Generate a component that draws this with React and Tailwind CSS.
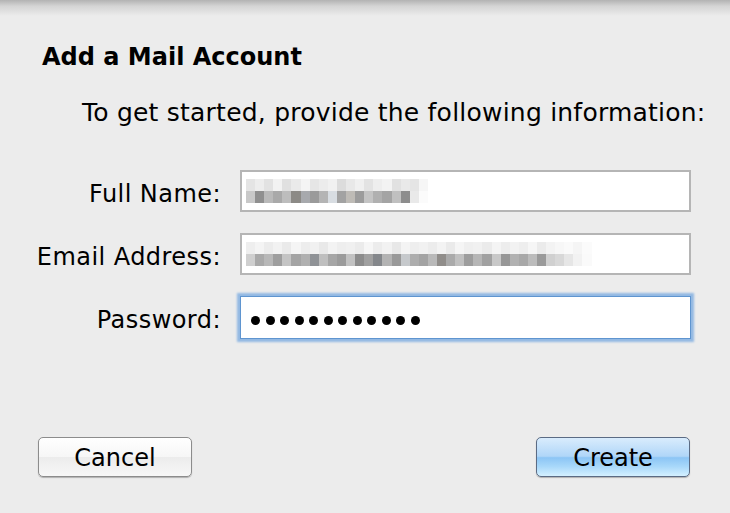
const nameTop = ['#e4e4e4', '#ededed', '#e2e2e2', '#f2f2f2', '#e0e0e0', '#eaeaea', '#f4f4f4', '#e6e6e6', '#ececec', '#f1f1f1', '#dcdcdc', '#e8e8e8', '#f0f0f0', '#e3e3e3', '#eeeeee', '#f3f3f3', '#e1e1e1', '#e9e9e9', '#e5e5e5', '#f6f6f6']
const nameBottom = ['#c8c8c8', '#8f8f8f', '#b9b9b9', '#a9a9a9', '#bdbdbd', '#8c8a86', '#a7a9ad', '#9a9a9a', '#b4b4b4', '#d8dde2', '#a2a2a2', '#bebbb6', '#9c9c9c', '#c4c4c4', '#b0b0b0', '#a4a4a4', '#c0c0c0', '#8d8d8d', '#e9e9e9', '#fbfbfb']
const mailTop = ['#eeeeee', '#f4f4f4', '#ececec', '#f2f2f2', '#eaeaea', '#f5f5f5', '#ededed', '#f1f1f1', '#e9e9e9', '#f3f3f3', '#eeeeee', '#f0f0f0', '#ebebeb', '#f6f6f6', '#ececec', '#f2f2f2', '#e8e8e8', '#f4f4f4', '#eeeeee', '#f1f1f1', '#ececec', '#f3f3f3', '#eaeaea', '#f5f5f5', '#efefef', '#f1f1f1', '#ebebeb', '#f4f4f4', '#ededed', '#f2f2f2', '#eeeeee', '#f6f6f6', '#ebebeb', '#f3f3f3', '#f7f7f7', '#fafafa', '#f5f5f5', '#fbfbfb']
const mailBottom = ['#cfcfcf', '#a9a9a9', '#b8b8b8', '#9e9e9e', '#c4c4c4', '#a4a4a4', '#b0b0b0', '#8f9296', '#bfbfbf', '#a6a6a6', '#9b9b9b', '#c2c2c2', '#8c8c8c', '#a0a0a0', '#84878b', '#b3b3b3', '#999999', '#c6c9cc', '#adadad', '#a3a3a3', '#b9b9b9', '#908d8a', '#aaaaaa', '#c0c0c0', '#9d9d9d', '#b6b6b6', '#a1a1a1', '#c8c8c8', '#979797', '#b1b1b1', '#a8a8a8', '#bcbcbc', '#9a9a9a', '#d0d0d0', '#d8d8d8', '#e6e6e6', '#f2f2f2', '#fafafa']

// blurred entries are drawn as a two-row mosaic of grey cells
const Mosaic = ({ top, bottom }) => (
    <div className="flex flex-col blur-[0.4px]">
        {[top, bottom].map((row, i) => (
            <div key={i} className="flex">
                {row.map((c, j) => (
                    <div key={j} className="w-[9.1px] h-[12px]" style={{ backgroundColor: c }} />
                ))}
            </div>
        ))}
    </div>
)

const Row = ({ label, children, focused }) => (
    <div className="flex items-center">
        <div className="w-[221px] pt-[5px] text-right leading-[24px] tracking-[0.45px]">{label}</div>
        <div
            className={
                focused
                    ? 'ml-[19px] w-[451px] h-[43px] bg-white border border-[#5f95d0] shadow-[0_0_2px_3px_#93b9e3] flex items-center px-[10px]'
                    : 'ml-[19px] w-[451px] h-[42px] bg-white border-2 border-[#b5b5b5] flex items-center px-[4px]'
            }
        >
            {children}
        </div>
    </div>
)

export default function App() {
    return (
        <div
            className="w-[730px] h-[513px] overflow-hidden bg-[linear-gradient(to_bottom,#b3b3b3_0px,#d4d4d4_6px,#ececec_16px)] text-black text-[24px]"
            style={{ fontFamily: '"DejaVu Sans", "Liberation Sans", sans-serif' }}
        >
            <h1 className="mt-[45px] ml-[42px] font-bold leading-[24px]">Add a Mail Account</h1>
            <p className="mt-[32px] ml-[82px] text-[25px] leading-[24px] tracking-[0.22px]">
                To get started, provide the following information:
            </p>

            <div className="mt-[45px] flex flex-col gap-[21px]">
                <Row label="Full Name:">
                    <Mosaic top={nameTop} bottom={nameBottom} />
                </Row>
                <Row label="Email Address:">
                    <Mosaic top={mailTop} bottom={mailBottom} />
                </Row>
                <Row label="Password:" focused>
                    <div className="flex gap-[5.5px] pt-[6px]">
                        {Array.from({ length: 12 }).map((_, i) => (
                            <div key={i} className="w-[9px] h-[9px] rounded-full bg-black" />
                        ))}
                    </div>
                </Row>
            </div>

            <div className="mt-[98px] flex justify-between pl-[38px] pr-[40px]">
                <button className="w-[154px] h-[40px] rounded-[5px] border border-[#8c8c8c] bg-[linear-gradient(to_bottom,#ffffff_0%,#f6f6f6_50%,#ececec_51%,#f7f7f7_100%)] shadow-[0_1px_1px_rgba(0,0,0,0.25)] leading-[24px] pt-[1px]">
                    Cancel
                </button>
                <button className="w-[154px] h-[40px] rounded-[5px] border border-[#5b6b84] bg-[linear-gradient(to_bottom,#d9ecfd_0%,#b0d6f8_48%,#8cc5f5_52%,#a8d8fa_75%,#d4f0ff_100%)] shadow-[0_1px_1px_rgba(0,0,0,0.25)] leading-[24px] pt-[1px]">
                    Create
                </button>
            </div>
        </div>
    )
}
